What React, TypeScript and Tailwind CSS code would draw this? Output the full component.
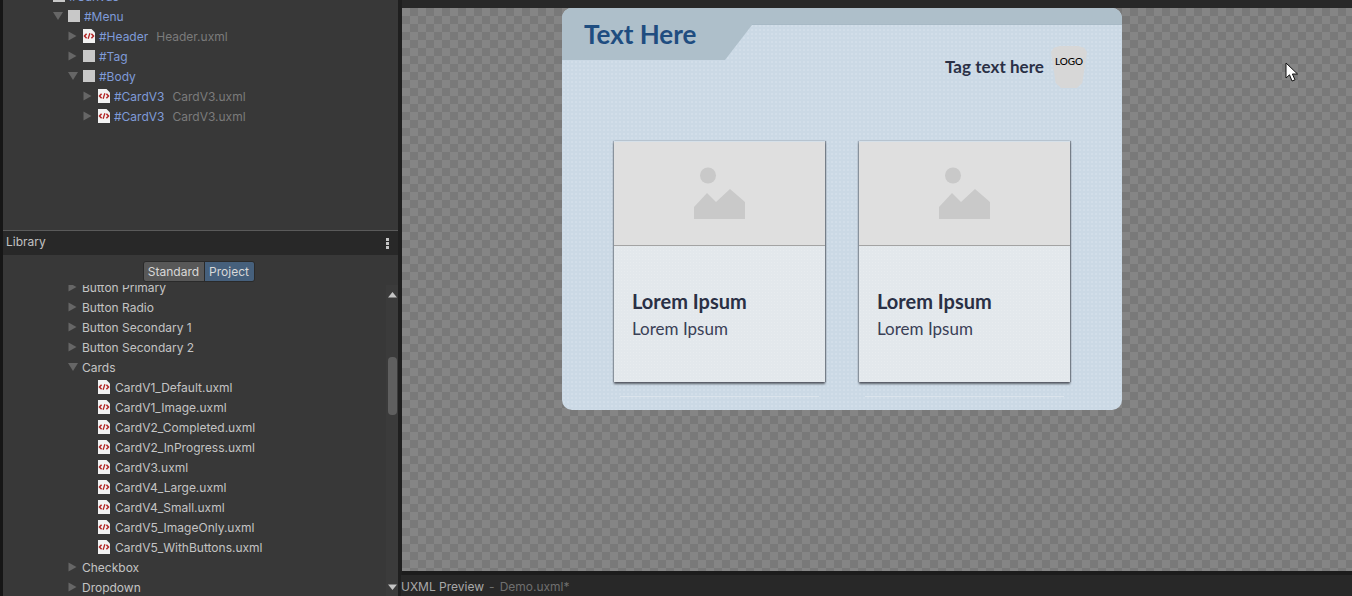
import React from "react";

function Arrow({ open }: { open?: boolean }) {
  return (
    <svg width="10" height="10" viewBox="0 0 10 10" className="shrink-0">
      {open ? <path d="M0 1H10L5 9Z" fill="#666666" /> : <path d="M0.5 0.5V9.5L8.5 5Z" fill="#666666" />}
    </svg>
  );
}

function FileIcon() {
  return (
    <svg width="12" height="14" viewBox="0 0 12 14" className="shrink-0">
      <path d="M0 0H8.5L12 3.5V14H0Z" fill="#f2f2f2" />
      <path d="M3.6 4.8L1.5 7L3.6 9.2M8.4 4.8L10.5 7L8.4 9.2" fill="none" stroke="#b32525" strokeWidth="1.5" />
      <path d="M6.9 4.2L5.1 9.8" fill="none" stroke="#b32525" strokeWidth="1.3" />
    </svg>
  );
}

function Tree({ pad, open, icon, name, file }: { pad: string; open?: boolean; icon: "file" | "box"; name: string; file?: string }) {
  return (
    <div className={"h-[20px] flex items-center " + pad}>
      <Arrow open={open} />
      <span className="ml-[5px]">{icon === "file" ? <FileIcon /> : <span className="block w-[12px] h-[12px] bg-[#c8c8c8]" />}</span>
      <span className="ml-[4px] pt-[2px] text-[#7f9bd8]">{name}</span>
      {file && <span className="ml-[8px] pt-[2px] text-[#7b7b7b]">{file}</span>}
    </div>
  );
}

function LibFolder({ name, open }: { name: string; open?: boolean }) {
  return (
    <div className="h-[20px] flex items-center pl-[65px] shrink-0">
      <Arrow open={open} />
      <span className="ml-[4px] pt-[1px]">{name}</span>
    </div>
  );
}

function LibFile({ name }: { name: string }) {
  return (
    <div className="h-[20px] flex items-center pl-[95px] shrink-0">
      <FileIcon />
      <span className="ml-[5px] pt-[1px]">{name}</span>
    </div>
  );
}

function Card() {
  return (
    <div className="relative w-[211px] h-[241px] flex flex-col border-t border-[#d6e0e8] shadow-[1px_0_1px_rgba(70,75,85,.5),-1px_0_1px_rgba(70,75,85,.3),0_2px_2px_rgba(60,62,70,.8)]">
      <div className="h-[103px] bg-[#dfdfdf] flex justify-center pt-[25px]">
        <svg width="52" height="52" viewBox="0 0 52 52">
          <circle cx="14" cy="8.5" r="8" fill="#c9c9c9" />
          <path d="M0 40L13 26L22 35L36 22L51 35V52H0Z" fill="#c9c9c9" />
        </svg>
      </div>
      <div className="h-px bg-[#a3a3a3]" />
      <div className="flex-1 bg-[#e3e8ec] pl-[18px] pt-[43px] bg-[radial-gradient(circle,rgba(255,255,255,.16)_0.6px,transparent_0.9px)] bg-[length:3px_3px]">
        <div className="text-[20px] leading-[24px] font-bold text-[#2a3045]">Lorem Ipsum</div>
        <div className="text-[17px] leading-[20px] mt-[6px] text-[#3a4056]">Lorem Ipsum</div>
      </div>
      <div className="absolute -bottom-[15px] left-[6px] right-[6px] h-px bg-[#dbe4ec]" />
    </div>
  );
}

export default function App() {
  return (
    <div className="w-[1352px] h-[596px] overflow-hidden flex bg-[#0d0d0d] text-[12px] font-['Inter',sans-serif]">
      <div className="w-[3px] shrink-0 bg-[#161616]" />

      <div className="w-[395px] shrink-0 flex flex-col bg-[#383838]">
        <div className="h-[230px] shrink-0 overflow-hidden">
          <div className="-mt-[14px]">
            <Tree pad="pl-[35px]" open icon="box" name="#Canvas" />
            <Tree pad="pl-[50px]" open icon="box" name="#Menu" />
            <Tree pad="pl-[65px]" icon="file" name="#Header" file="Header.uxml" />
            <Tree pad="pl-[65px]" icon="box" name="#Tag" />
            <Tree pad="pl-[65px]" open icon="box" name="#Body" />
            <Tree pad="pl-[80px]" icon="file" name="#CardV3" file="CardV3.uxml" />
            <Tree pad="pl-[80px]" icon="file" name="#CardV3" file="CardV3.uxml" />
          </div>
        </div>
        <div className="h-px bg-[#5a5a5a] shrink-0" />
        <div className="h-[24px] shrink-0 bg-[#282828] flex items-center justify-between pl-[3px] pr-[9px] text-[#c2c2c2]">
          <span className="pb-[2px]">Library</span>
          <span className="flex flex-col gap-[1px]">
            <span className="w-[3px] h-[3px] bg-[#c4c4c4]" />
            <span className="w-[3px] h-[3px] bg-[#c4c4c4]" />
            <span className="w-[3px] h-[3px] bg-[#c4c4c4]" />
          </span>
        </div>
        <div className="h-[30px] shrink-0 flex items-start justify-center pt-[6px] pr-[4px]">
          <div className="flex h-[21px] rounded-[3px] overflow-hidden border border-[#2a2a2a] text-[#d8d8d8]">
            <span className="w-[60px] bg-[#585858] flex items-center justify-center">Standard</span>
            <span className="w-[1px] bg-[#2a2a2a]" />
            <span className="w-[49px] bg-[#46607c] flex items-center justify-center">Project</span>
          </div>
        </div>
        <div className="flex-1 min-h-0 flex">
          <div className="flex-1 overflow-hidden text-[#c4c4c4]">
            <div className="-mt-[8px] flex flex-col">
              <LibFolder name="Button Primary" />
              <LibFolder name="Button Radio" />
              <LibFolder name="Button Secondary 1" />
              <LibFolder name="Button Secondary 2" />
              <LibFolder name="Cards" open />
              <LibFile name="CardV1_Default.uxml" />
              <LibFile name="CardV1_Image.uxml" />
              <LibFile name="CardV2_Completed.uxml" />
              <LibFile name="CardV2_InProgress.uxml" />
              <LibFile name="CardV3.uxml" />
              <LibFile name="CardV4_Large.uxml" />
              <LibFile name="CardV4_Small.uxml" />
              <LibFile name="CardV5_ImageOnly.uxml" />
              <LibFile name="CardV5_WithButtons.uxml" />
              <LibFolder name="Checkbox" />
              <LibFolder name="Dropdown" />
            </div>
          </div>
          <div className="w-[12px] shrink-0 bg-[#3b3b3b] flex flex-col items-center">
            <svg width="9" height="6" viewBox="0 0 9 6" className="mt-[7px]"><path d="M0 5.5H9L4.5 0Z" fill="#c4c4c4" /></svg>
            <div className="w-[9px] h-[58px] mt-[59px] rounded-[4px] bg-[#5f5f5f]" />
            <svg width="9" height="6" viewBox="0 0 9 6" className="mt-auto mb-[6px]"><path d="M0 0.5H9L4.5 6Z" fill="#c4c4c4" /></svg>
          </div>
        </div>
      </div>

      <div className="w-[4px] shrink-0 bg-[#1f1f1f]" />

      <div className="flex-1 min-w-0 flex flex-col">
        <div className="h-[8px] shrink-0 bg-[#282828]" />
        <div className="relative h-[563px] shrink-0 pl-[160px] bg-[repeating-conic-gradient(#797979_0_25%,#858585_0_50%)] bg-[length:16px_16px]">
          <div className="relative w-[560px] h-[402px] rounded-[10px] overflow-hidden bg-[#cbd9e5] font-['Lato',sans-serif] bg-[radial-gradient(circle,rgba(255,255,255,.22)_0.6px,transparent_0.9px)] bg-[length:4px_4px]">
            <div className="h-[17px] bg-[#aebfca] border-b border-[#a8bac6]" />
            <div className="absolute left-0 top-0 w-[190px] h-[52px] bg-[#aebfca] [clip-path:polygon(0_0,100%_0,100%_17px,163px_100%,0_100%)] pl-[22px] pt-[9px] text-[26px] leading-[34px] font-bold text-[#1f4d80]">Text Here</div>
            <div className="mt-[20px] flex justify-end items-start pr-[35px] text-[#2a3045]">
              <span className="mt-[11px] text-[17px] leading-[22px] font-bold tracking-[0.05px]">Tag text here</span>
              <div className="ml-[7px] w-[36px] h-[42px] mt-[1px] bg-[#d7d7d7] [clip-path:polygon(0_14%,8%_4%,25%_0,75%_0,92%_4%,100%_14%,87%_88%,72%_100%,28%_100%,13%_88%)] flex justify-center pt-[8px] text-[10px] leading-[14px] font-medium text-black">LOGO</div>
            </div>
            <div className="mt-[53px] pl-[52px] flex gap-[34px]">
              <Card />
              <Card />
            </div>
          </div>
          <svg width="14" height="21" viewBox="0 0 14 21" className="absolute left-[883px] top-[54px]">
            <path d="M1 1V16L4.5 12.8L7 19L10 17.8L7.4 12H12.5Z" fill="#fff" stroke="#111" strokeWidth="1" />
          </svg>
        </div>
        <div className="h-[4px] shrink-0 bg-[#1c1c1c]" />
        <div className="flex-1 bg-[#282828] flex items-center pt-[2px] -ml-px text-[#a8a8a8]">
          <span>UXML Preview</span>
          <span className="ml-[5px] text-[#6f6f6f]">-</span>
          <span className="ml-[5px] text-[#6f6f6f]">Demo.uxml*</span>
        </div>
      </div>
    </div>
  );
}
